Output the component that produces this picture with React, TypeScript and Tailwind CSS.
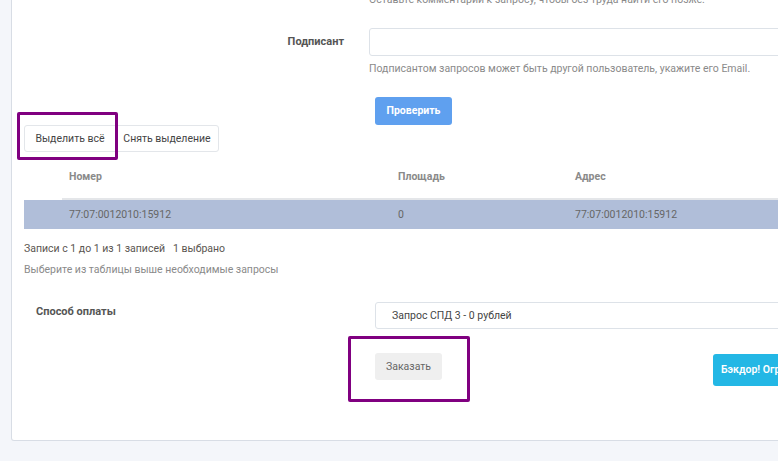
import React from "react"

const font = { fontFamily: "Roboto, 'Noto Sans', sans-serif" }

export default function App() {
  return (
    <div className="relative h-[461px] w-[778px] overflow-hidden bg-[#f4f6fa]" style={font}>
      {/* ── Card ── */}
      <div className="-mt-[12px] ml-[11px] w-[900px] rounded-bl-[3px] border border-t-0 border-[#d8dde5] bg-white pl-[12px] pb-[54px] text-[10.5px]">
        {/* comment hint, cut off at the top */}
        <div className="flex">
          <div className="w-[320px]" />
          <p className="ml-[25px] pt-[4px] leading-[16px] text-[#8a8a8a]">
            Оставьте комментарий к запросу, чтобы без труда найти его позже.
          </p>
        </div>

        {/* Signer row */}
        <div className="mt-[20px] flex">
          <div className="flex h-[28px] w-[320px] items-center justify-end text-[11px] font-bold text-[#555]">
            Подписант
          </div>
          <div className="ml-[25px] flex-1">
            <div className="h-[28px] w-full rounded-[3px] border border-[#dde2e8] bg-white" />
            <p className="mt-[6px] leading-[14px] text-[#8a8a8a]">
              Подписантом запросов может быть другой пользователь, укажите его Email.
            </p>
            <button
              type="button"
              className="ml-[6px] mt-[21px] h-[28px] w-[77px] rounded-[3px] bg-[#5fa0ef] text-[10.5px] font-bold text-white"
            >
              Проверить
            </button>
          </div>
        </div>

        {/* Select buttons */}
        <div className="flex">
          <button type="button" className="h-[27px] w-[92px] rounded-l-[3px] border border-[#e3e6ea] bg-white text-[10.5px] text-[#444]">
            Выделить всё
          </button>
          <button type="button" className="-ml-px h-[27px] w-[104px] rounded-r-[3px] border border-[#e3e6ea] bg-white text-[10.5px] text-[#444]">
            Снять выделение
          </button>
        </div>

        {/* Table */}
        <div className="mt-[4px]">
          <div className="flex h-[44px] items-center font-bold text-[#8a8a8a]">
            <div className="w-[38px]" />
            <div className="flex h-full w-[329px] items-center border-b-2 border-[#e4e6e9] pl-[7px]">Номер</div>
            <div className="flex h-full w-[177px] items-center border-b-2 border-[#e4e6e9] pl-[7px]">Площадь</div>
            <div className="flex h-full flex-1 items-center border-b-2 border-[#e4e6e9] pl-[7px]">Адрес</div>
          </div>
          <div className="flex h-[29px] items-center bg-[#b0bed9] text-[#666]">
            <div className="w-[38px]" />
            <div className="w-[329px] pl-[7px]">77:07:0012010:15912</div>
            <div className="w-[177px] pl-[7px]">0</div>
            <div className="flex-1 pl-[7px]">77:07:0012010:15912</div>
          </div>
        </div>

        <p className="mt-[12px] leading-[16px] text-[#5a5550]">
          Записи с 1 до 1 из 1 записей
          <span className="ml-[8px]">1 выбрано</span>
        </p>
        <p className="mt-[5px] leading-[16px] text-[#8a8a8a]">
          Выберите из таблицы выше необходимые запросы
        </p>

        {/* Payment */}
        <div className="mt-[24px] flex">
          <div className="w-[351px] pl-[12px] pt-[2px] text-[11px] font-bold text-[#555]">Способ оплаты</div>
          <div className="flex-1">
            <div className="flex h-[27px] items-center rounded-[3px] border border-[#dde2e8] pl-[16px] text-[#444]">
              Запрос СПД 3 - 0 рублей
            </div>
            <div className="mt-[24px] flex items-start">
              <button type="button" className="h-[27px] w-[67px] rounded-[3px] bg-[#efefef] text-[10.5px] text-[#666]">
                Заказать
              </button>
              <button
                type="button"
                className="ml-[271px] mt-[1px] h-[32px] whitespace-nowrap rounded-[3px] bg-[#23b7e5] px-[8px] text-[10.5px] font-semibold text-white"
              >
                Бэкдор! Ограничить доступ
              </button>
            </div>
          </div>
        </div>
      </div>

      {/* ── Annotation frames ── */}
      <div className="absolute left-[17px] top-[112px] h-[48px] w-[101px] rounded-[2px] border-[3px] border-[#800080]" />
      <div className="absolute left-[348px] top-[336px] h-[66px] w-[122px] rounded-[2px] border-[3px] border-[#800080]" />
    </div>
  )
}
